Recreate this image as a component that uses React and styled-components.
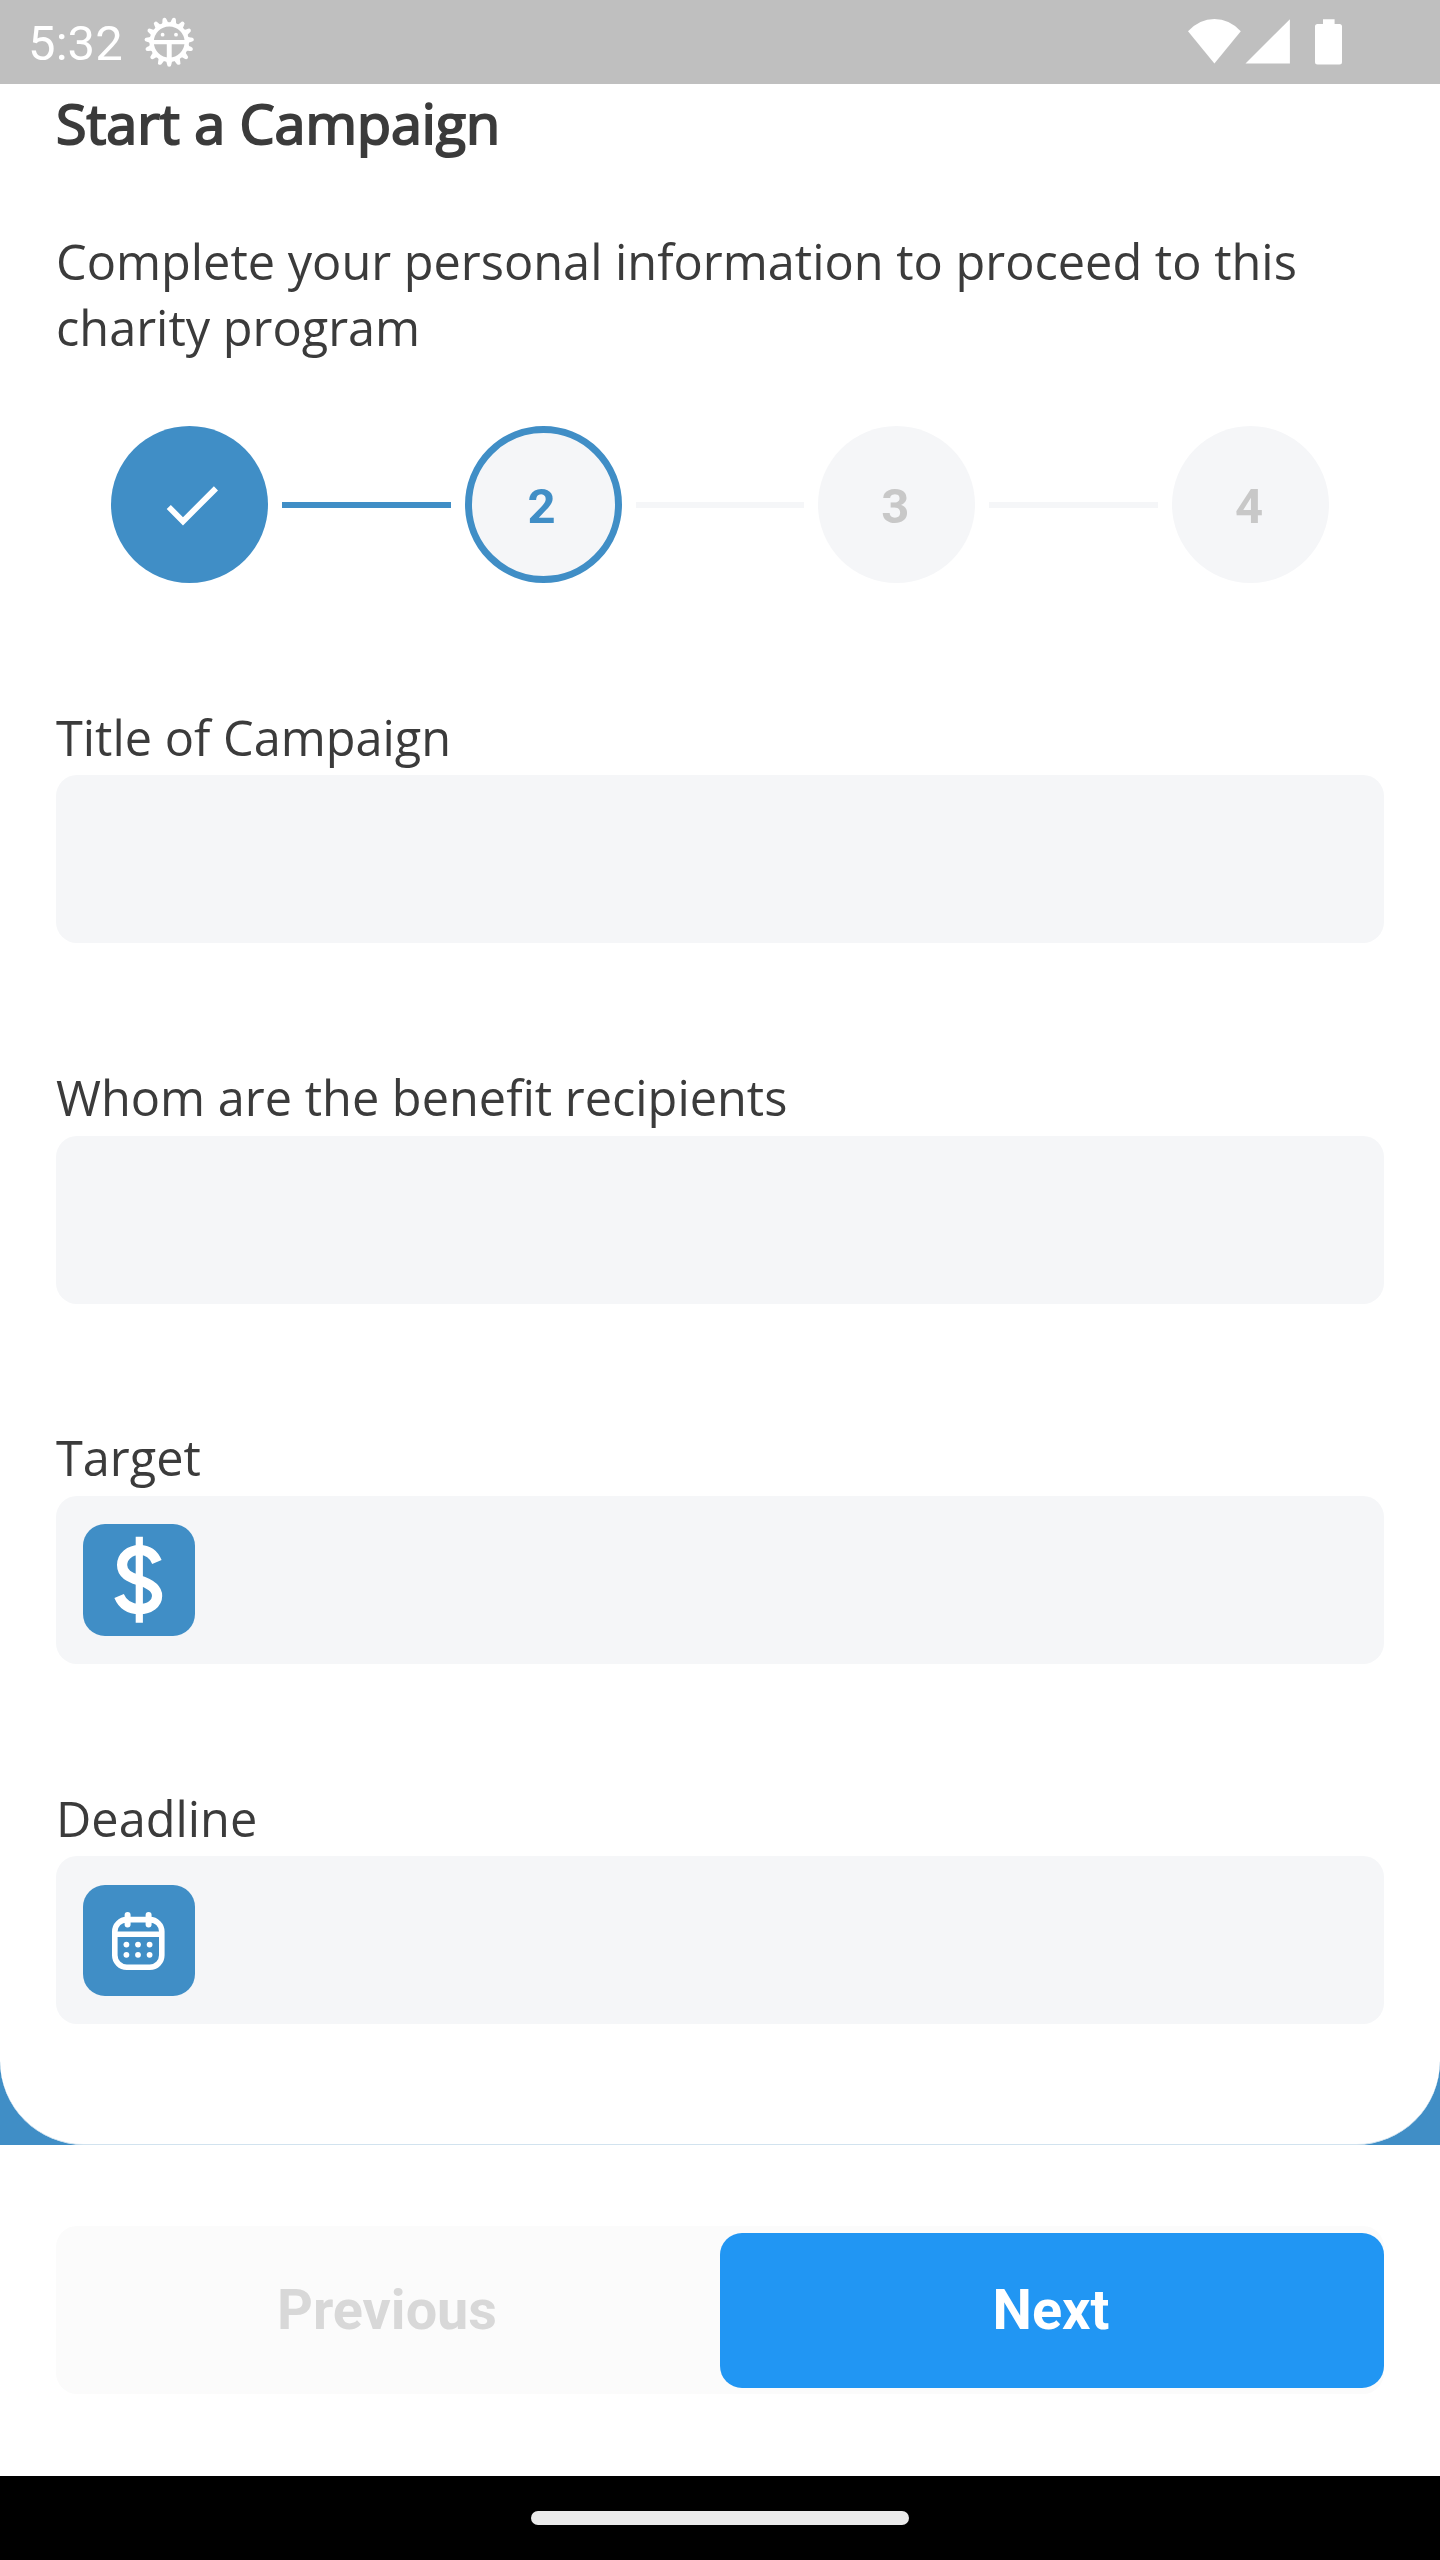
import React from "react";
import styled, { createGlobalStyle } from "styled-components";

const blue = "#408ec6";
const surface = "#f5f6f8";
const ink = "#3b3b3b";

const GlobalStyle = createGlobalStyle`
  *, *::before, *::after { box-sizing: border-box; }
  body { margin: 0; background: #000; }
`;

const Screen = styled.div`
  display: flex;
  flex-direction: column;
  width: 1440px;
  height: 2560px;
  background: #fff;
  color: ${ink};
  font-family: "Open Sans", sans-serif;
  overflow: hidden;
`;

const StatusBar = styled.header`
  display: flex;
  flex: none;
  justify-content: space-between;
  height: 84px;
  padding: 0 98px 0 28px;
  background: #bfbfbf;
  color: #fff;
`;

const StatusGroup = styled.div`
  display: flex;
  align-items: flex-start;
  gap: ${(p) => p.$gap}px;
`;

const Clock = styled.span`
  padding-top: 15px;
  font: 400 49px/58px Roboto, sans-serif;
  width: 95px;
  letter-spacing: 0.1px;
  white-space: nowrap;
`;

const StatusIcon = styled.svg`
  display: block;
  flex: none;
  height: 84px;
`;

const SheetBackdrop = styled.div`
  flex: none;
  height: 2061px;
  background: ${blue};
`;

const Sheet = styled.main`
  height: 2061px;
  padding: 1px 56px 0;
  background: #fff;
  border-radius: 0 0 84px 84px;
  border-bottom: 1px solid #d2e3ef;
`;

const Title = styled.h1`
  margin: 0 0 67px;
  font-size: 55.6px;
  font-weight: 400;
  line-height: 76px;
  -webkit-text-stroke: 2px ${ink};
`;

const Intro = styled.p`
  margin: 0 0 66px;
  font-size: 48.68px;
  line-height: 66px;
`;

const Stepper = styled.div`
  display: flex;
  align-items: center;
  gap: 14px;
  margin: 0 55px 120.5px;
`;

const Step = styled.div`
  display: flex;
  flex: none;
  align-items: center;
  justify-content: center;
  width: 157px;
  height: 157px;
  border-radius: 50%;
  border: ${(p) => (p.$state === "current" ? `7px solid ${blue}` : "none")};
  background: ${(p) => (p.$state === "done" ? blue : surface)};
  color: ${(p) => (p.$state === "current" ? blue : "#c8c8c8")};
  font: 700 49px/58px Roboto, sans-serif;
`;

const StepNumber = styled.span`
  padding: 5px 3px 0 0;
`;

const Connector = styled.div`
  flex: 1;
  height: 6px;
  background: ${(p) => (p.$done ? blue : surface)};
`;

const Field = styled.div`
  height: 360.4px;
`;

const FieldLabel = styled.span`
  display: block;
  font-size: 48.68px;
  line-height: 66px;
`;

const FieldBox = styled.div`
  display: flex;
  align-items: center;
  height: 168px;
  margin-top: 5.7px;
  padding: 0 27.4px;
  border-radius: 21px;
  background: ${surface};
`;

const Badge = styled.svg`
  display: block;
  width: 111.6px;
  height: 111.6px;
  border-radius: 22px;
  background: ${blue};
`;

const Footer = styled.footer`
  flex: 1;
  padding: 81px 56px 0;
  background: #fff;
`;

const ButtonTray = styled.div`
  display: flex;
  align-items: center;
  height: 168px;
  border-radius: 21px;
  background: #fbfbfb;
`;

const Button = styled.button`
  flex: 1;
  height: 155px;
  margin-top: 1px;
  padding: 0 2px 2px 0;
  border: 0;
  border-radius: 22px;
  background: ${(p) => (p.$primary ? "#2196f3" : "transparent")};
  color: ${(p) => (p.$primary ? "#fff" : "#d8d8d8")};
  font: 700 55.8px/66px Roboto, sans-serif;
`;

const NavBar = styled.div`
  display: flex;
  flex: none;
  justify-content: center;
  height: 84px;
  padding-top: 35px;
  background: #000;
`;

const NavHandle = styled.div`
  width: 378px;
  height: 14px;
  border-radius: 7px;
  background: #ebebeb;
`;

const teeth = Array.from({ length: 15 }, (_, i) => i * 24);

function GearFace() {
  return (
    <StatusIcon width="52" viewBox="143 0 52 84" fill="#fff">
      {teeth.map((angle) => (
        <path
          key={angle}
          d="M164.8 60 Q166.9 61.5 167 64.2 Q167.2 66.8 169.2 66.8 Q171.2 66.8 171.4 64.2 Q171.5 61.5 173.6 60Z"
          transform={`rotate(${angle} 169.2 42)`}
        />
      ))}
      <circle cx="169.2" cy="42" r="17.6" fill="none" stroke="#fff" strokeWidth="4.4" />
      <path d="M153 40h32.4v4.2h-13.7V59h-4.9V44.2H153z" />
      <circle cx="162.6" cy="34.7" r="1.9" />
      <circle cx="176" cy="34.7" r="1.9" />
    </StatusIcon>
  );
}

function CheckMark() {
  return (
    <svg width="70" height="70" viewBox="-0.6 0 24 24" fill="#fff">
      <path d="M9 16.17 4.83 12l-1.42 1.41L9 19 21 7l-1.41-1.41z" />
    </svg>
  );
}

function DollarBadge() {
  return (
    <Badge viewBox="83.4 1524 111.6 111.6" fill="none" stroke="#fff">
      <path
        d="M157.3 1562C154 1554 148 1550 140 1550C130 1550 122.5 1556.5 122.5 1565C122.5 1574 130 1577.2 139 1580.2C150 1583.5 157.5 1588 157.5 1596C157.5 1603.5 150 1609 140 1609C130 1609 123 1604.5 119.5 1596"
        strokeWidth="10.2"
      />
      <path d="M139.7 1536.7V1622.7" strokeWidth="7.2" />
    </Badge>
  );
}

function CalendarBadge() {
  return (
    <Badge viewBox="83.4 1884 111.6 111.6" fill="none" stroke="#fff" strokeWidth="5.6">
      <rect x="115.2" y="1918.6" width="47" height="47.6" rx="12" />
      <path d="M115 1933.3h47.4" />
      <path d="M128 1914v9.4M149 1914v9.4" strokeLinecap="round" strokeWidth="6" />
      <g fill="#fff" stroke="none">
        {[126.8, 138.4, 150].map((x) => (
          <React.Fragment key={x}>
            <circle cx={x} cy="1943.6" r="2.9" />
            <circle cx={x} cy="1953.8" r="2.9" />
          </React.Fragment>
        ))}
      </g>
    </Badge>
  );
}

const fields = [
  { label: "Title of Campaign" },
  { label: "Whom are the benefit recipients" },
  { label: "Target", icon: <DollarBadge /> },
  { label: "Deadline", icon: <CalendarBadge /> },
];

export default function App() {
  return (
    <Screen>
      <GlobalStyle />
      <StatusBar>
        <StatusGroup $gap={20}>
          <Clock>5:32</Clock>
          <GearFace />
        </StatusGroup>
        <StatusGroup $gap={0}>
          <StatusIcon width="154" viewBox="1188 0 154 84" fill="#fff">
            <path d="M1188 31.3Q1199.5 19.1 1214.4 19.1T1240.8 31.3L1214.4 63.4Z" />
            <path d="M1245.5 63.6H1289.9V19.2Z" />
            <path d="M1323 19.2h11.6V24h4.9q2.5 0 2.5 2.5V62q0 2.5-2.5 2.5h-22q-2.5 0-2.5-2.5V26.5q0-2.5 2.5-2.5h5.5z" />
          </StatusIcon>
        </StatusGroup>
      </StatusBar>

      <SheetBackdrop>
        <Sheet>
          <Title>Start a Campaign</Title>
          <Intro>Complete your personal information to proceed to this charity program</Intro>
          <Stepper>
            <Step $state="done">
              <CheckMark />
            </Step>
            <Connector $done />
            <Step $state="current">
              <StepNumber>2</StepNumber>
            </Step>
            <Connector />
            <Step>
              <StepNumber>3</StepNumber>
            </Step>
            <Connector />
            <Step>
              <StepNumber>4</StepNumber>
            </Step>
          </Stepper>
          {fields.map(({ label, icon }) => (
            <Field key={label}>
              <FieldLabel>{label}</FieldLabel>
              <FieldBox>{icon}</FieldBox>
            </Field>
          ))}
        </Sheet>
      </SheetBackdrop>

      <Footer>
        <ButtonTray>
          <Button>Previous</Button>
          <Button $primary>Next</Button>
        </ButtonTray>
      </Footer>
      <NavBar>
        <NavHandle />
      </NavBar>
    </Screen>
  );
}
